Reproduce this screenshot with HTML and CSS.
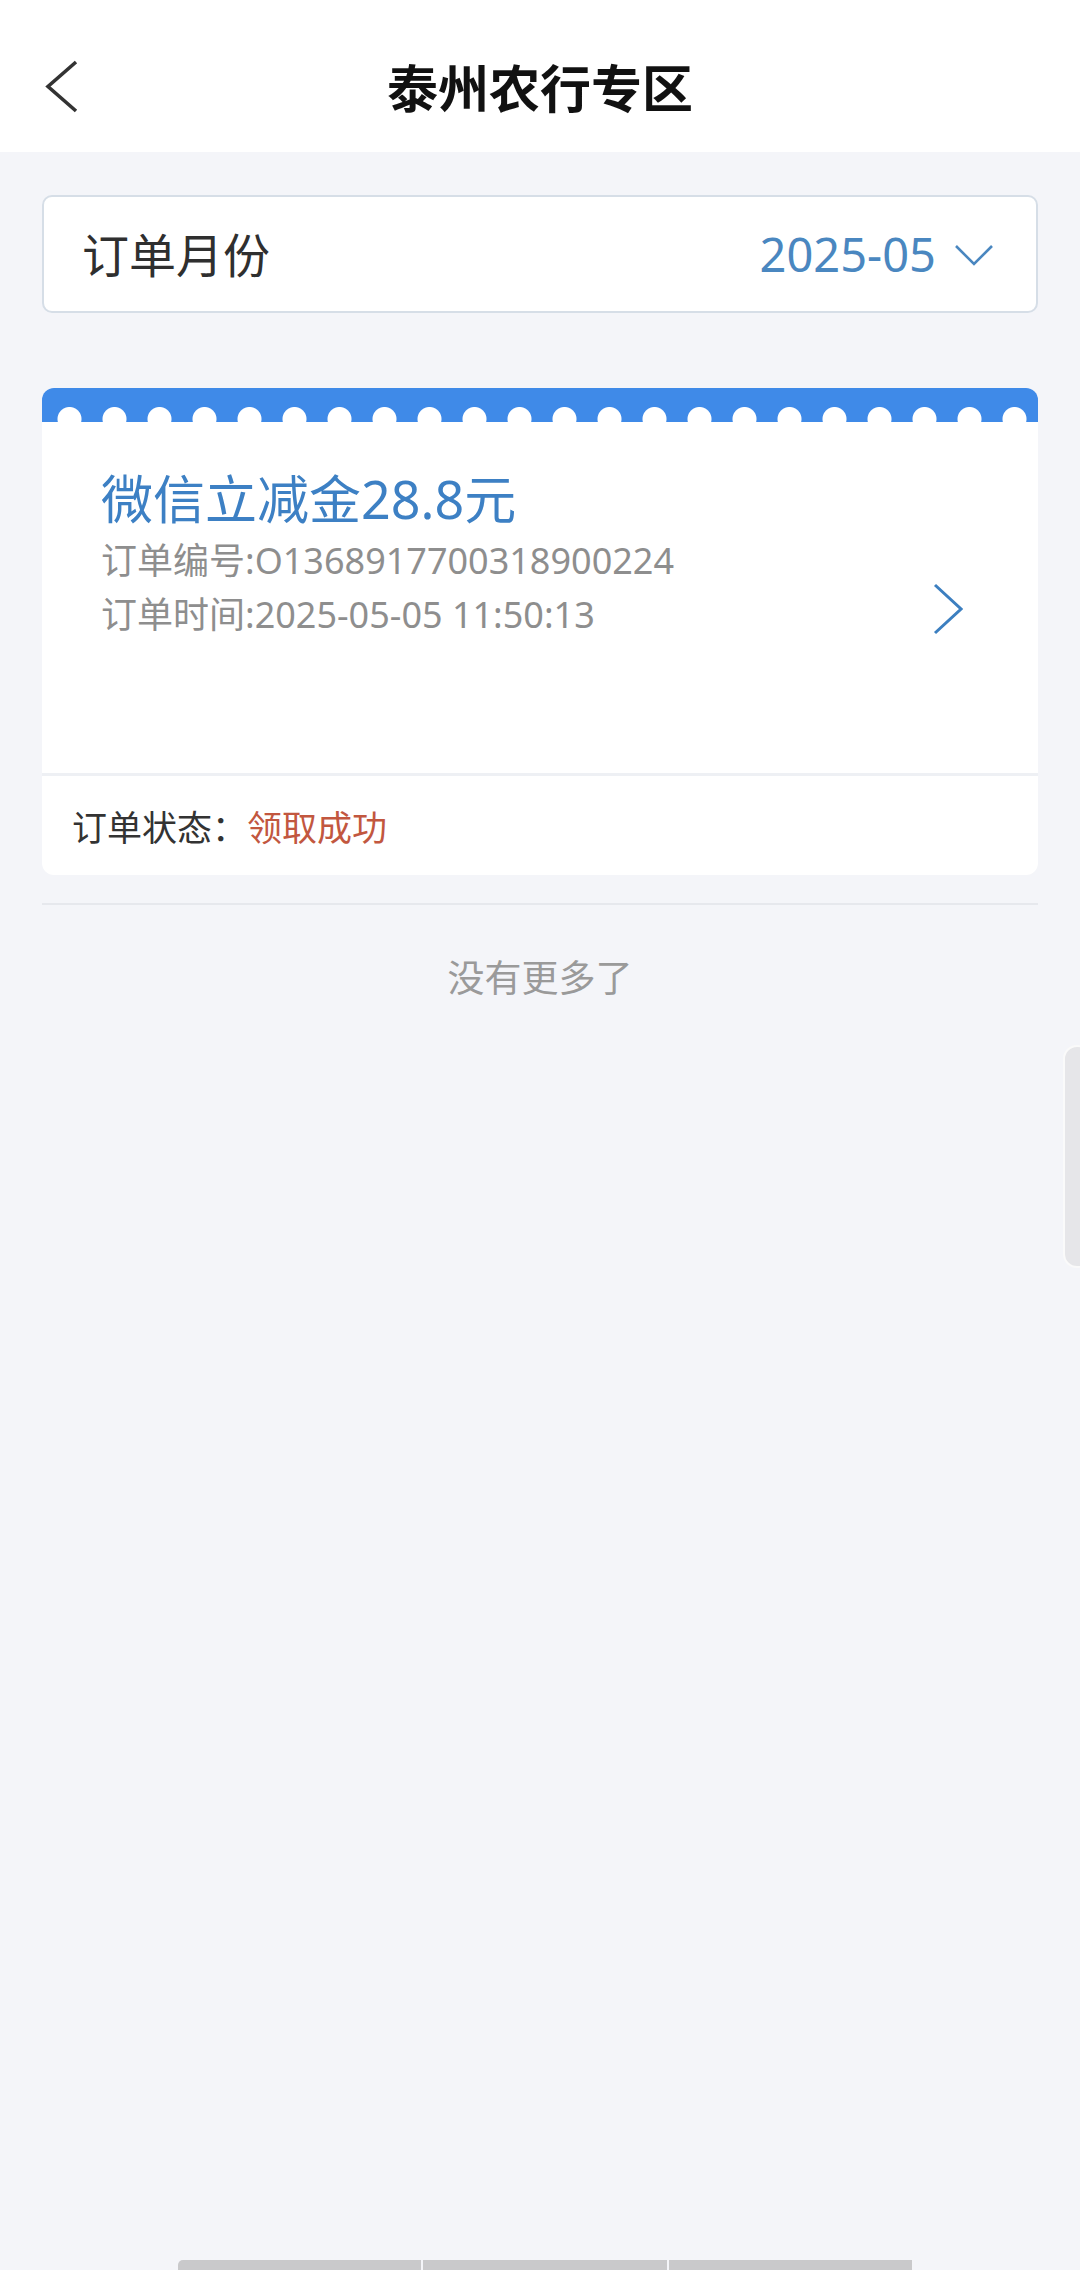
FILE: index.html
```html
<!DOCTYPE html>
<html lang="zh-CN">
<head>
<meta charset="utf-8">
<title>泰州农行专区</title>
<link rel="stylesheet" href="styles.css">
</head>
<body>
<div class="page">
  <header class="topbar">
    <div class="back">
      <svg width="40" height="56" viewBox="0 0 40 56"><path d="M34 4 L6 28.5 L34 53" fill="none" stroke="#333" stroke-width="3.6" stroke-linejoin="miter"/></svg>
    </div>
    <h1 class="title">泰州农行专区</h1>
    <div class="back-spacer"></div>
  </header>

  <main class="content">
    <div class="month-box">
      <span class="month-label">订单月份</span>
      <span class="month-value">2025-05
        <svg class="month-chev" width="40" height="22" viewBox="0 0 40 22"><path d="M2 2 L20 20 L38 2" fill="none" stroke="#4a87c0" stroke-width="2.6"/></svg>
      </span>
    </div>

    <div class="card">
      <div class="card-band"></div>
      <div class="card-body">
        <div class="card-info">
          <div class="card-title">微信立减金28.8元</div>
          <div class="card-line">订单编号:O1368917700318900224</div>
          <div class="card-line">订单时间:2025-05-05 11:50:13</div>
        </div>
        <svg class="card-chev" width="30" height="52" viewBox="0 0 30 52"><path d="M2 2 L28 26 L2 50" fill="none" stroke="#3c7fc0" stroke-width="3"/></svg>
      </div>
      <div class="card-status">
        <span class="status-label">订单状态：</span><span class="status-value">领取成功</span>
      </div>
    </div>

    <div class="sep"></div>
    <div class="no-more">没有更多了</div>
  </main>

  <div class="scroll-handle"></div>
  <div class="bottom-bar">
    <span class="seg"></span><span class="seg"></span><span class="seg"></span>
  </div>
</div>
</body>
</html>
```

FILE: styles.css
```css
html, body {
  margin: 0;
  padding: 0;
}
body {
  background: #f4f5f9;
  font-family: "Noto Sans", "Noto Sans CJK SC", sans-serif;
  color: #333;
}
.page {
  position: relative;
  min-height: 2270px;
  overflow: hidden;
}
.topbar {
  height: 152px;
  background: #fff;
  display: flex;
  align-items: center;
  padding: 16px 42px 0 42px;
  box-sizing: border-box;
}
.back {
  width: 120px;
  display: flex;
  align-items: center;
  padding-top: 4px;
}
.back-spacer {
  width: 120px;
}
.title {
  flex: 1;
  margin: 0;
  text-align: center;
  font-family: "Noto Sans CJK SC", sans-serif;
  font-weight: 700;
  font-size: 51px;
  line-height: 60px;
  color: #111;
  padding-top: 4px;
}
.content {
  padding: 0 42px;
}
.month-box {
  margin-top: 43px;
  height: 118px;
  box-sizing: border-box;
  background: #fff;
  border: 2px solid #d6dee7;
  border-radius: 10px;
  display: flex;
  align-items: center;
  justify-content: space-between;
  padding: 0 42px 0 38px;
}
.month-label {
  font-family: "Noto Sans CJK SC", sans-serif;
  font-size: 47px;
  color: #2f2f2f;
  margin-top: -4px;
}
.month-value {
  display: flex;
  align-items: center;
  font-size: 47px;
  color: #4a87c0;
  gap: 18px;
}
.month-chev {
  margin-top: 2px;
}
.card {
  margin-top: 75px;
  border-radius: 12px;
  overflow: hidden;
  background: #fff;
}
.card-band {
  height: 34px;
  background-color: #3f8ae8;
  background-image: radial-gradient(circle at 22.5px 31px, #fff 11.5px, rgba(255,255,255,0) 12.5px);
  background-size: 45px 34px;
  background-position: 5px 0;
  background-repeat: repeat-x;
}
.card-body {
  height: 354px;
  box-sizing: border-box;
  display: flex;
  align-items: flex-start;
  justify-content: space-between;
  padding: 46px 75px 0 59px;
  border-bottom: 3px solid #eef0f4;
}
.card-title {
  font-size: 52px;
  line-height: 62px;
  color: #3d80c4;
  margin-bottom: 4px;
}
.card-line {
  font-size: 36px;
  line-height: 54px;
  color: #8e8e8e;
}
.card-chev {
  margin-top: 115px;
}
.card-status {
  height: 99px;
  display: flex;
  align-items: center;
  padding-left: 30px;
  font-family: "Noto Sans CJK SC", sans-serif;
  font-size: 35px;
}
.status-label {
  color: #333;
}
.status-value {
  color: #c2573f;
}
.sep {
  margin-top: 28px;
  height: 2px;
  background: #e6e8ed;
}
.no-more {
  margin-top: 41px;
  text-align: center;
  font-family: "Noto Sans CJK SC", sans-serif;
  font-size: 37px;
  line-height: 60px;
  color: #9a9a9a;
}
.scroll-handle {
  position: absolute;
  right: -12px;
  top: 1045px;
  width: 29px;
  height: 223px;
  box-sizing: border-box;
  background: #e6e6e9;
  border: 2px solid #fafafa;
  border-radius: 14px;
}
.bottom-bar {
  position: absolute;
  left: 178px;
  bottom: 0;
  width: 734px;
  height: 10px;
  display: flex;
  gap: 2px;
}
.seg {
  flex: 1;
  background: #c9c9cb;
}
.seg:first-child {
  border-radius: 5px 0 0 0;
}
```
